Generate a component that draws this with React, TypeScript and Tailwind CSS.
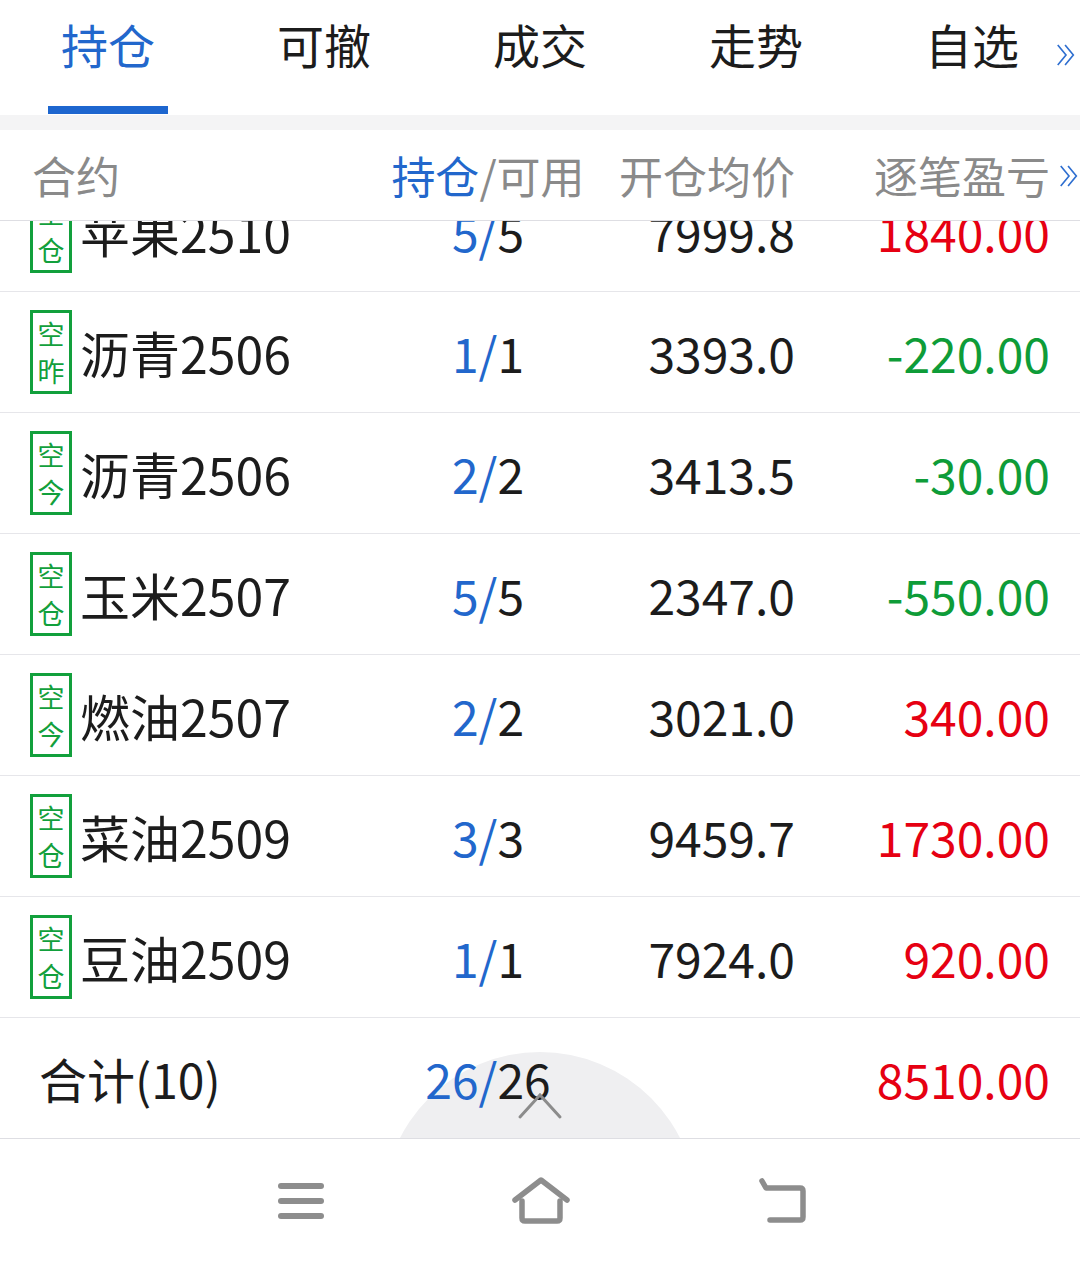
import React from "react";

type Row = {
  b: [string, string];
  name: string;
  pos: string;
  avail: string;
  price: string;
  pnl: string;
  up: boolean;
};

const rows: Row[] = [
  { b: ["空", "仓"], name: "苹果2510", pos: "5", avail: "5", price: "7999.8", pnl: "1840.00", up: true },
  { b: ["空", "昨"], name: "沥青2506", pos: "1", avail: "1", price: "3393.0", pnl: "-220.00", up: false },
  { b: ["空", "今"], name: "沥青2506", pos: "2", avail: "2", price: "3413.5", pnl: "-30.00", up: false },
  { b: ["空", "仓"], name: "玉米2507", pos: "5", avail: "5", price: "2347.0", pnl: "-550.00", up: false },
  { b: ["空", "今"], name: "燃油2507", pos: "2", avail: "2", price: "3021.0", pnl: "340.00", up: true },
  { b: ["空", "仓"], name: "菜油2509", pos: "3", avail: "3", price: "9459.7", pnl: "1730.00", up: true },
  { b: ["空", "仓"], name: "豆油2509", pos: "1", avail: "1", price: "7924.0", pnl: "920.00", up: true },
];

const tabs = ["持仓", "可撤", "成交", "走势", "自选"];

function DoubleChevron({ className }: { className?: string }) {
  return (
    <svg viewBox="0 0 24 26" className={className} fill="none" stroke="#2f6fd0" strokeWidth="1.8" strokeLinejoin="miter">
      <polyline points="3,2 12,13 3,24" />
      <polyline points="11,2 20,13 11,24" />
    </svg>
  );
}

function Badge({ b }: { b: [string, string] }) {
  return (
    <div className="flex h-[84px] w-[42px] shrink-0 flex-col items-center justify-center border-[3px] border-[#12a03c] text-[27px] leading-[37px] text-[#12a03c]">
      <span>{b[0]}</span>
      <span>{b[1]}</span>
    </div>
  );
}

export default function App() {
  return (
    <div className="relative h-[1266px] w-[1080px] overflow-hidden bg-white font-['Noto_Sans_CJK_SC','Noto_Sans',sans-serif] text-[#1c1c1c]">
      {/* Tabs */}
      <div className="relative flex h-[115px] w-full">
        {tabs.map((t, i) => (
          <div key={t} className="relative flex w-[216px] flex-col items-center">
            <div className={`mt-[18px] text-[47px] leading-[52px] ${i === 0 ? "text-[#2267cc]" : "text-[#1c1c1c]"}`}>{t}</div>
            {i === 0 && <div className="absolute bottom-[1px] h-[8px] w-[120px] bg-[#1d66cf]" />}
          </div>
        ))}
        <DoubleChevron className="absolute right-[3px] top-[42px] h-[26px] w-[22px]" />
      </div>
      <div className="h-[15px] bg-[#f4f4f5]" />

      {/* Header */}
      <div className="relative z-10 grid h-[91px] grid-cols-[360px_196px_209px_255px] items-center border-b border-[#dedee3] bg-white pl-[30px] pr-[30px] text-[44px] leading-none text-[#8a8a8a]">
        <div className="pl-[2px]">合约</div>
        <div className="text-center">
          <span className="text-[#2267cc]">持仓</span>/可用
        </div>
        <div className="text-right">开仓均价</div>
        <div className="text-right">逐笔盈亏</div>
        <DoubleChevron className="absolute right-[0px] top-[32px] h-[28px] w-[22px]" />
      </div>

      {/* List */}
      <div className="h-[797px] overflow-hidden">
        <div className="-mt-[50px]">
          {rows.map((r, i) => (
            <div
              key={i}
              className="grid h-[121px] grid-cols-[360px_196px_209px_255px] items-center border-b border-[#e6e6ea] pl-[30px] pr-[30px] text-[48px] leading-none"
            >
              <div className="flex items-center gap-[8px]">
                <Badge b={r.b} />
                <span className="text-[50px]">{r.name}</span>
              </div>
              <div className="text-center">
                <span className="text-[#2267cc]">{r.pos}/</span>
                <span>{r.avail}</span>
              </div>
              <div className="text-right">{r.price}</div>
              <div className={`text-right ${r.up ? "text-[#e60012]" : "text-[#0e9c38]"}`}>{r.pnl}</div>
            </div>
          ))}
        </div>
      </div>

      {/* Total */}
      <div className="relative h-[121px] overflow-hidden border-b border-[#dedee3]">
        <div className="absolute left-[383px] top-[34px] h-[314px] w-[314px] rounded-full bg-[#efeff1]" />
        <div className="relative z-10 grid h-[120px] grid-cols-[360px_196px_209px_255px] items-center pl-[30px] pr-[30px] text-[48px] leading-none">
          <div className="pl-[9px]">合计(10)</div>
          <div className="text-center">
            <span className="text-[#2267cc]">26/</span>
            <span>26</span>
          </div>
          <div />
          <div className="text-right text-[#e60012]">8510.00</div>
        </div>
        <svg className="absolute left-[517px] top-[72px] z-20 h-[30px] w-[46px]" viewBox="0 0 46 30" fill="none" stroke="#8c8c8c" strokeWidth="3" strokeLinecap="round">
          <polyline points="3,27 23,5 43,27" />
        </svg>
      </div>

      {/* Nav bar */}
      <div className="flex h-[127px] items-center justify-center gap-[186px] bg-white pb-[4px] pl-[6px]">
        <svg width="48" height="44" viewBox="0 0 48 44" fill="none" stroke="#8d8d8d" strokeWidth="6" strokeLinecap="round">
          <line x1="4" y1="7" x2="44" y2="7" />
          <line x1="4" y1="22" x2="44" y2="22" />
          <line x1="4" y1="37" x2="44" y2="37" />
        </svg>
        <svg width="60" height="48" viewBox="0 0 60 48" fill="none" stroke="#8d8d8d" strokeWidth="5.5" strokeLinecap="round" strokeLinejoin="round">
          <polyline points="4,23 30,3 56,23" />
          <path d="M11 24 V41 Q11 44 14 44 H46 Q49 44 49 41 V24" />
        </svg>
        <svg width="52" height="46" viewBox="0 0 52 46" fill="none" stroke="#8d8d8d" strokeWidth="5.5" strokeLinecap="round" strokeLinejoin="round">
          <path d="M5 3 L9 10 H43 Q46 10 46 13 V39 Q46 42 43 42 H13" />
        </svg>
      </div>
    </div>
  );
}
